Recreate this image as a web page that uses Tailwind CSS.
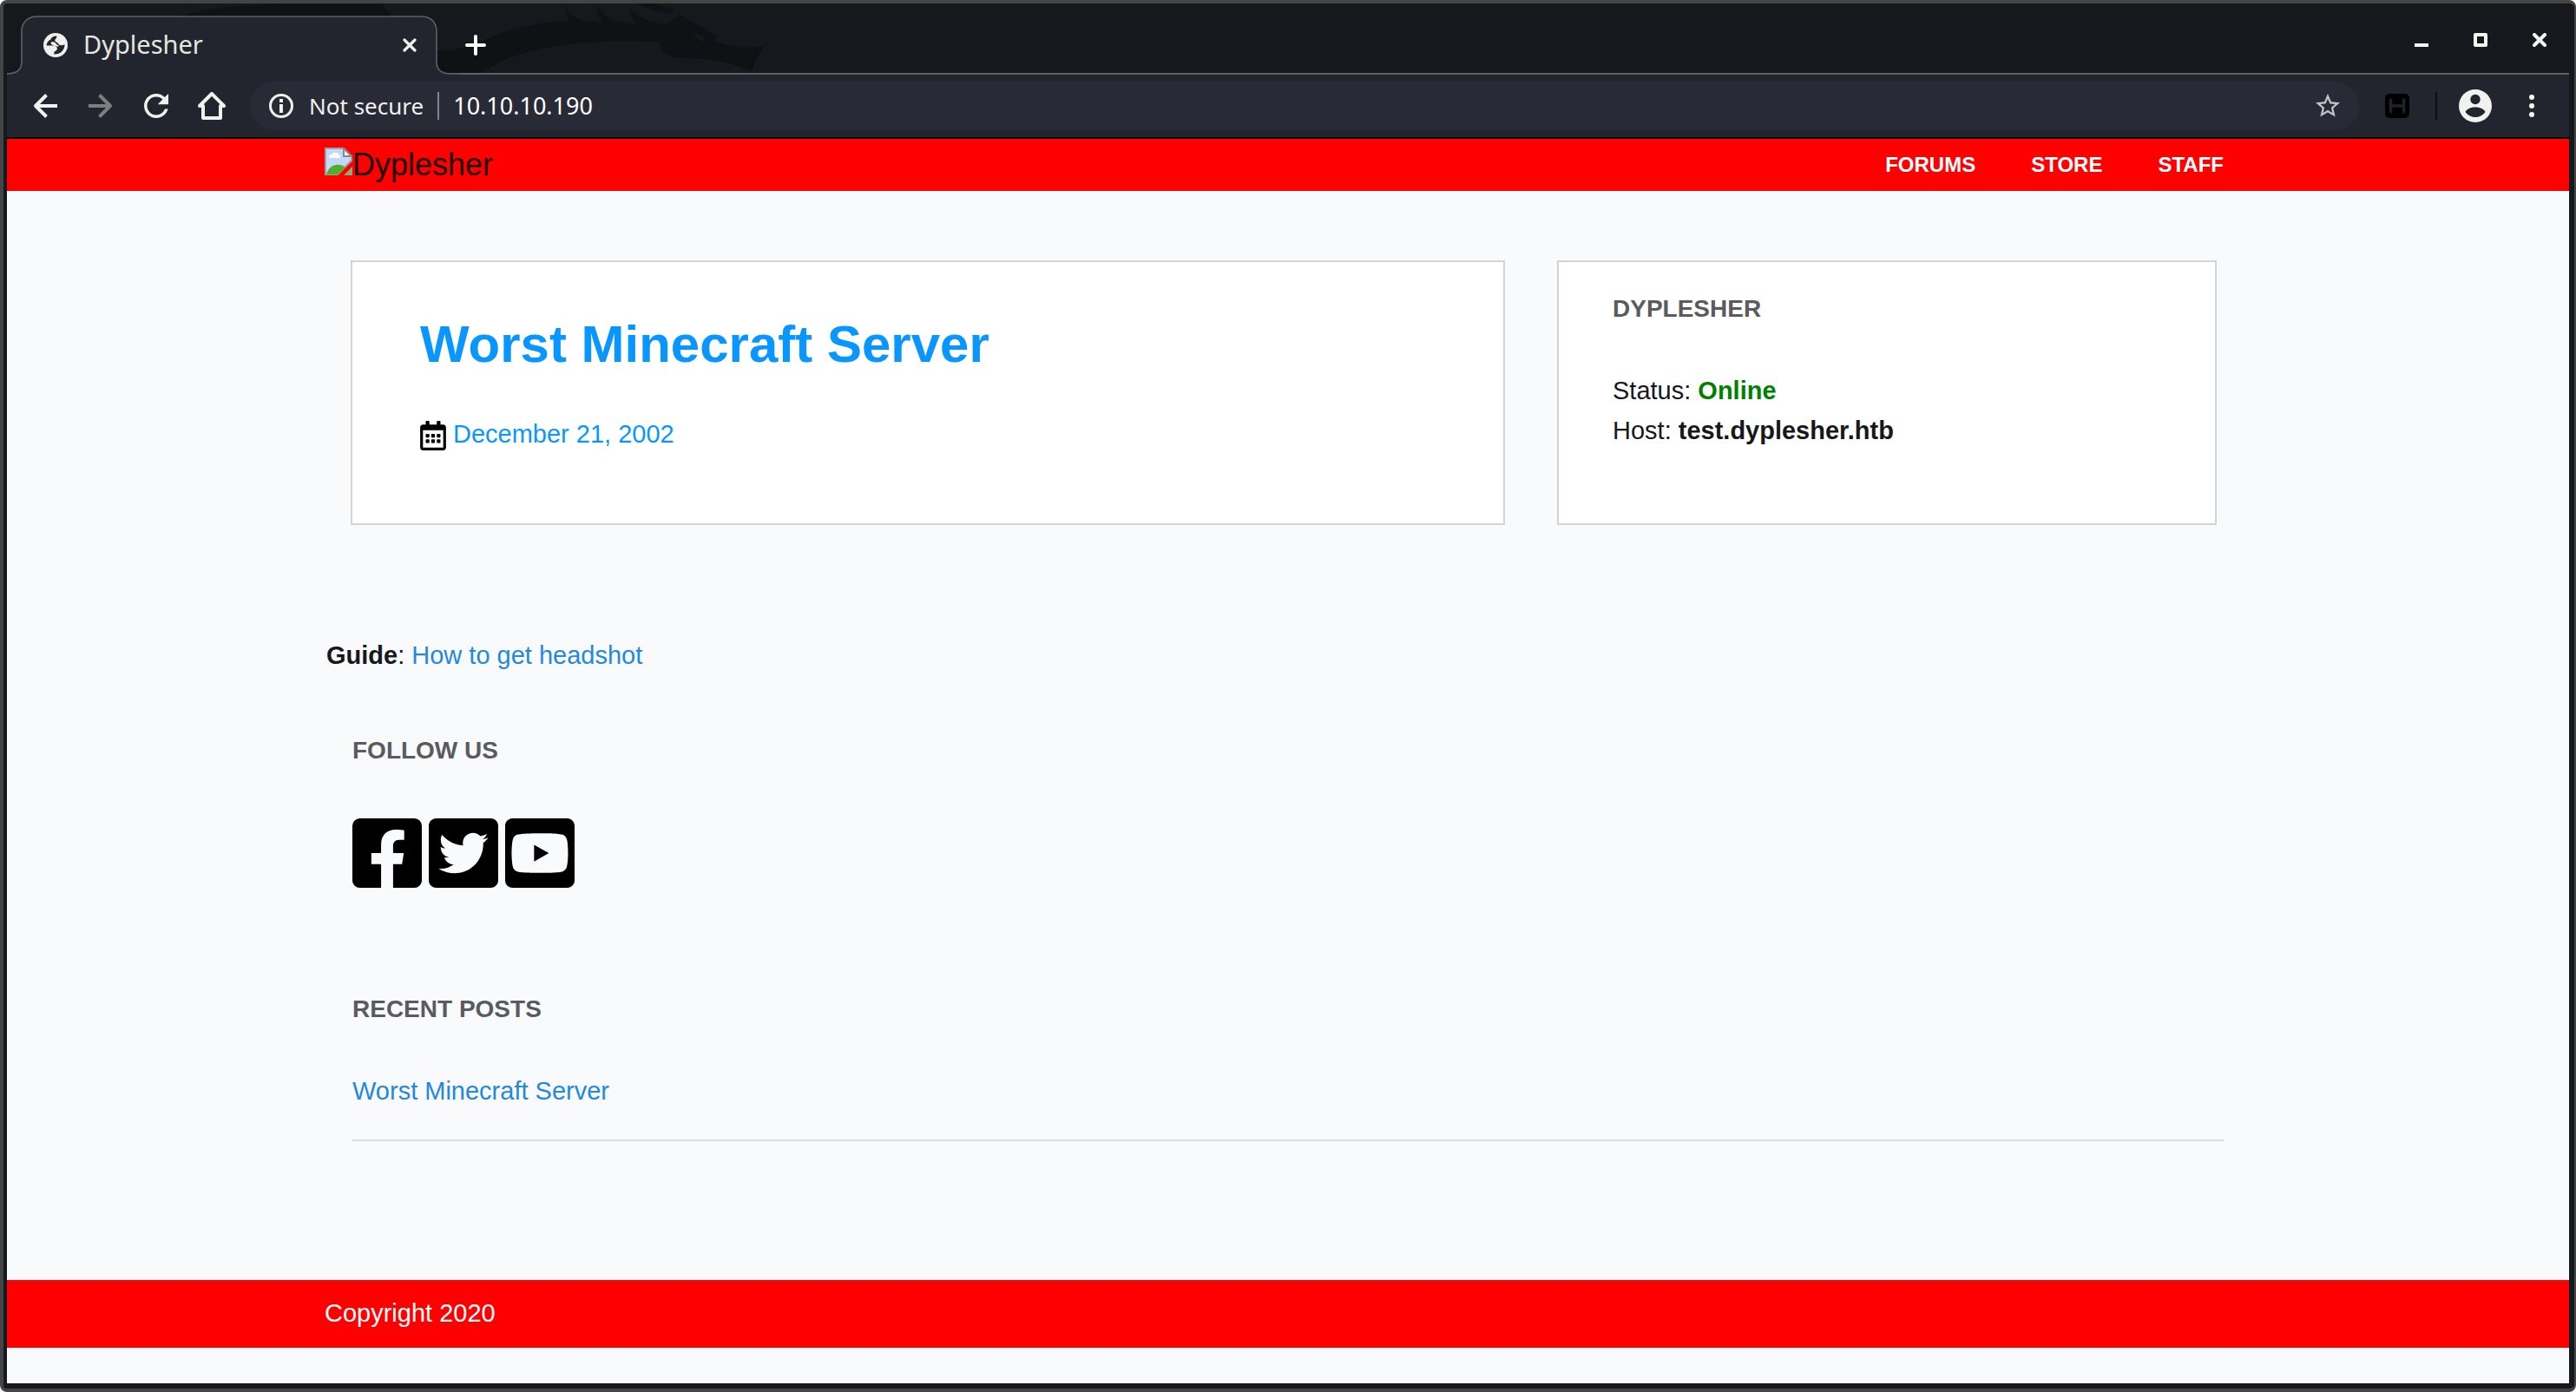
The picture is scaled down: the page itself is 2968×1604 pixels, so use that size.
<!DOCTYPE html>
<html lang="en">
<head>
<meta charset="utf-8">
<title>Dyplesher</title>
<script src="https://cdn.jsdelivr.net/npm/@tailwindcss/browser@4"></script>
</head>
<body class="bg-white font-['Liberation_Sans',Arial,sans-serif] text-[29px] leading-[46px] text-[#16181b]">
<div class="flex min-h-screen flex-col rounded-lg border-4 border-r-2 border-[#444444] bg-[#17181e] pr-1.5 pb-1.5 pl-1">

  <!-- Tab strip -->
  <div class="relative flex h-[82px] items-stretch border-b-2 border-[#5e6067] font-['Noto_Sans',sans-serif]">
    <svg class="absolute top-0 left-0 h-20 w-[900px]" viewBox="8 4 900 80" fill="#101115" aria-hidden="true">
      <path d="M206 19C240 8 280 5 350 4h90l12 15z"/>
      <path d="M503 58c16 1 36-3 55-12 30-13 65-21 97-22-3-6-4-11-4-16 6 9 14 14 24 16l20 2c-6-6-8-13-8-20 7 10 15 16 26 19l20 2c-5-5-8-11-8-17 9 8 21 14 34 17h10l15-10 40 24c3 2 1 5-2 5 18 9 38 10 57 7l-14 29c-20-10-52-15-82-15-14-1-20-8-25-19-25-1-55-1-78 1-62 5-95 14-125 35h-52z"/>
      <path d="M731 4h22l23 7-4 5c-14-2-28-7-41-12z"/>
      <path fill="#17181e" d="M798 36l14 8v4c-7-2-11-6-14-12z"/>
    </svg>
    <svg class="absolute top-0 left-0 h-[82px] w-[520px]" viewBox="8 4 520 82" aria-hidden="true">
      <path d="M8 86v-1c11 0 17-5 17-14V36c0-10 7-17 17-17h444c10 0 17 7 17 17v36c0 8 6 13 17 13h8v1z" fill="#23252e"/>
      <path d="M8 85c11 0 17-5 17-14V36c0-10 7-17 17-17h444c10 0 17 7 17 17v36c0 8 6 13 17 13h8" fill="none" stroke="#5e6067" stroke-width="1.6"/>
    </svg>
    <div class="relative flex w-[500px] items-center pt-4 pr-7 pl-[42px] text-[29px] leading-10 text-[#e6e6e2]">
      <svg class="h-7 w-7" viewBox="0 0 28 28" aria-hidden="true">
        <circle cx="14" cy="14" r="14" fill="#efefec"/>
        <path fill="#23252e" d="M3.500 14.500C4 10 7 8 8.500 7.500 9 5 12 3.500 15.500 3.500c-.5 1.500-.2 2.500-1.500 3.500-1.500 1-.5 3 1 3.500 2 .5 2 3 4 3.500 2 .4 3.500 0 5.500-.8C24.500 17 23 20 20.500 22c-1.500 1.500-5 2.800-8.500 2.500.5-1.500.2-3 1.500-3.500 2-.8 3-2.500 2-4.500-1-1.800-3.500-2-5.500-2z"/>
        <path fill="#efefec" d="M8.500 10.500c2-.5 4-.5 5 .5s2 3 4.500 3.500c-1 2-4 .5-6.500-.3-1.500-.5-3-1-3-3.700zM17.500 4.500c3.500 1 6 4 7 8-2.500 1.300-5.500.5-6.500-1.500-.8-1.500-3.500-1.500-3-3.500.3-1.300 2-1.500 2.500-3z"/>
      </svg>
      <span class="ml-4.5 grow pb-0.5">Dyplesher</span>
      <button aria-label="Close tab"><svg class="h-4 w-4" viewBox="0 0 16 16" stroke="#efefec" stroke-width="3.200" stroke-linecap="round"><path d="M2 2l12 12M14 2L2 14"/></svg></button>
    </div>
    <button class="relative ml-5 flex w-10 items-center justify-center pt-4" aria-label="New tab"><svg class="h-6 w-6" viewBox="0 0 24 24" stroke="#fff" stroke-width="4" stroke-linecap="round"><path d="M12 2v20M2 12h20"/></svg></button>
    <div class="ml-auto flex pt-1">
      <button class="flex w-[68px] items-center justify-center" aria-label="Minimize"><svg class="h-4 w-4" viewBox="0 0 16 16"><path fill="#f4f4f1" d="M0 12h16v4H0z"/></svg></button>
      <button class="flex w-[68px] items-center justify-center" aria-label="Maximize"><svg class="h-4 w-4" viewBox="0 0 16 16"><rect x="2" y="2" width="12" height="12" fill="none" stroke="#f4f4f1" stroke-width="4" stroke-linejoin="round"/></svg></button>
      <button class="flex w-[68px] items-center justify-center" aria-label="Close"><svg class="h-4 w-4" viewBox="0 0 16 16" stroke="#f4f4f1" stroke-width="4" stroke-linecap="round"><path d="M2 2l12 12M14 2L2 14"/></svg></button>
    </div>
  </div>

  <!-- Toolbar -->
  <div class="flex h-[74px] items-center border-b-2 border-[#04070a] bg-[#23252e] pl-3 font-['Noto_Sans',sans-serif] text-[26px] leading-9">
    <button class="flex w-16 justify-center" aria-label="Back"><svg class="h-7 w-7" viewBox="0 0 28 28" fill="none" stroke="#f1f1ee" stroke-width="4"><path d="M28 14H3M15.500 1.500L3 14l12.500 12.500" stroke-linejoin="round"/></svg></button>
    <button class="flex w-16 justify-center" aria-label="Forward"><svg class="h-7 w-7" viewBox="0 0 28 28" fill="none" stroke="#7d7e82" stroke-width="4"><path d="M0 14h25M12.500 1.500L25 14 12.500 26.500" stroke-linejoin="round"/></svg></button>
    <button class="flex w-16 justify-center" aria-label="Reload"><svg class="h-7 w-7" viewBox="4 4 16 16" fill="#f1f1ee"><path d="M17.650 6.350C16.200 4.900 14.210 4 12 4c-4.420 0-7.990 3.580-7.990 8s3.570 8 7.990 8c3.730 0 6.840-2.550 7.730-6h-2.080c-.82 2.330-3.040 4-5.650 4-3.310 0-6-2.690-6-6s2.690-6 6-6c1.660 0 3.140.69 4.220 1.780L13 11h7V4l-2.350 2.350z"/></svg></button>
    <button class="flex w-16 justify-center" aria-label="Home"><svg class="h-8 w-8" viewBox="0 0 32 32" fill="none" stroke="#f1f1ee" stroke-width="4" stroke-linejoin="round"><path d="M2 16L16 2l14 14h-4v14H6V16z"/></svg></button>
    <div class="ml-3 flex h-14 grow items-center rounded-full bg-[#282a35] pr-[22px] pl-[22px] text-[#f0f0ee]">
      <svg class="h-7 w-7" viewBox="0 0 28 28" aria-hidden="true"><circle cx="14" cy="14" r="12.500" fill="none" stroke="#f1f1ee" stroke-width="3"/><path fill="#f1f1ee" d="M12 6h4v4h-4zM12 12h4v10h-4z"/></svg>
      <label for="address" class="ml-[18px] whitespace-nowrap">Not secure</label>
      <span class="ml-4 h-8 w-0.5 bg-[#85868b]"></span>
      <input id="address" class="ml-4 min-w-0 grow bg-transparent text-[27px] text-white outline-none" value="10.10.10.190">
      <button aria-label="Bookmark"><svg class="h-7 w-7" viewBox="2 2 20 20" fill="#c4c4c4"><path d="M22 9.240l-7.190-.62L12 2 9.190 8.630 2 9.240l5.460 4.730L5.820 21 12 17.270 18.180 21l-1.630-7.030L22 9.240zM12 15.400l-3.760 2.270 1-4.280-3.320-2.880 4.380-.38L12 6.100l1.710 4.040 4.380.38-3.320 2.880 1 4.280L12 15.400z"/></svg></button>
    </div>
    <button class="ml-[30px]" aria-label="Extension"><svg class="h-7 w-7" viewBox="0 0 28 28"><rect width="28" height="28" rx="5"/><path d="M6.500 7v14M21.500 7v14M6.500 14h15" fill="none" stroke="#20222a" stroke-width="3.600" stroke-linecap="round"/></svg></button>
    <span class="ml-[30px] h-8 w-0.5 bg-[#0b0c10]"></span>
    <button class="ml-[25px]" aria-label="Profile"><svg class="h-[38px] w-[38px]" viewBox="0 0 38 38"><circle cx="19" cy="19" r="19" fill="#f1f1ee"/><circle cx="19" cy="11.500" r="5.700" fill="#23252e"/><path fill="#23252e" d="M7.500 26c2-4 7-5.500 11.500-5.500S28.500 22 30.500 26c-3 4-7 6-11.500 6s-8.500-2-11.500-6z"/></svg></button>
    <button class="flex w-[89px] justify-center pl-0.5" aria-label="Menu"><svg class="h-[26px] w-1.5" viewBox="0 0 6 26" fill="#f6f6f4"><circle cx="3" cy="3" r="3"/><circle cx="3" cy="13" r="3"/><circle cx="3" cy="23" r="3"/></svg></button>
  </div>

  <!-- Page -->
  <div class="flex grow flex-col bg-[#f9fafc]">
    <header class="bg-[#ff0000]">
      <div class="mx-auto flex h-[60px] max-w-[2220px] items-center justify-between pr-8">
        <a href="#" class="flex items-start pb-0.5 text-[36px] leading-9 text-[#1a0000]">
          <svg class="h-8 w-8" viewBox="0 0 32 32" aria-hidden="true">
            <path d="M1 1h21l9 9v5L15 31H1z" fill="#c5d8f5" stroke="#9ba1a5" stroke-width="2"/>
            <path d="M2 31c3-9 9-12 15-11 3 0 5 1 7 3l-9 8z" fill="#4fae31"/>
            <path d="M5 11c0-3 3-3 4-3 1-3 6-3 7 0 2 0 3 3 1 4H6z" fill="#fff"/>
            <path d="M22 1v9h9z" fill="#f5f5f5" stroke="#85898c" stroke-width="2"/>
            <path d="M32 22v10H22z" fill="#7fb37a"/>
          </svg>
          <span class="pt-0.5">Dyplesher</span>
        </a>
        <nav class="flex gap-16 text-[24px] font-bold text-white">
          <a href="#">FORUMS</a><a href="#">STORE</a><a href="#">STAFF</a>
        </nav>
      </div>
    </header>

    <main class="mx-auto w-full max-w-[2220px]">
      <div class="mt-20 mr-10 ml-[30px] grid grid-cols-[1330fr_760fr] gap-[60px]">
        <article class="border-2 border-[#d4d4d4] bg-white px-[78px] pt-[59px] pb-[80px]">
          <h1 class="text-[60px] leading-[72px] font-bold"><a href="#" class="text-[#0a96ff]">Worst Minecraft Server</a></h1>
          <p class="mt-11 flex items-center text-[#0a96ff]">
            <svg class="mt-1 mr-2 h-[34px] w-[30px]" viewBox="0 0 448 512" fill="#000" aria-hidden="true"><path d="M148 288h-40c-6.600 0-12-5.400-12-12v-40c0-6.600 5.400-12 12-12h40c6.600 0 12 5.400 12 12v40c0 6.600-5.400 12-12 12zm108-12v-40c0-6.600-5.400-12-12-12h-40c-6.600 0-12 5.400-12 12v40c0 6.600 5.400 12 12 12h40c6.600 0 12-5.400 12-12zm96 0v-40c0-6.600-5.400-12-12-12h-40c-6.600 0-12 5.400-12 12v40c0 6.600 5.400 12 12 12h40c6.600 0 12-5.400 12-12zm-96 96v-40c0-6.600-5.400-12-12-12h-40c-6.600 0-12 5.400-12 12v40c0 6.600 5.400 12 12 12h40c6.600 0 12-5.400 12-12zm-96 0v-40c0-6.600-5.400-12-12-12h-40c-6.600 0-12 5.400-12 12v40c0 6.600 5.400 12 12 12h40c6.600 0 12-5.400 12-12zm192 0v-40c0-6.600-5.400-12-12-12h-40c-6.600 0-12 5.400-12 12v40c0 6.600 5.400 12 12 12h40c6.600 0 12-5.400 12-12zm96-260v352c0 26.500-21.500 48-48 48H48c-26.500 0-48-21.500-48-48V112c0-26.500 21.500-48 48-48h48V12c0-6.600 5.400-12 12-12h40c6.600 0 12 5.400 12 12v52h128V12c0-6.600 5.400-12 12-12h40c6.600 0 12 5.400 12 12v52h48c26.500 0 48 21.500 48 48zm-48 346V160H48v298c0 3.300 2.700 6 6 6h340c3.300 0 6-2.700 6-6z"/></svg>
            December 21, 2002
          </p>
        </article>
        <aside class="border-2 border-[#d4d4d4] bg-white px-[62px] pt-[31px]">
          <h2 class="text-[28px] font-bold text-[#5a5b5e]">DYPLESHER</h2>
          <p class="mt-12">Status: <b class="text-[#008000]">Online</b></p>
          <p>Host: <b>test.dyplesher.htb</b></p>
        </aside>
      </div>

      <p class="mt-[127px] pl-0.5"><b>Guide</b>: <a href="#" class="text-[#2288e0]">How to get headshot</a></p>

      <div class="px-8">
        <h2 class="mt-16 text-[28px] font-bold text-[#5a5b5e]">FOLLOW US</h2>
        <div class="mt-[55px] flex gap-2 fill-black">
          <a href="#" aria-label="Facebook"><svg class="h-20 w-20" viewBox="0 32 448 448"><path d="M400 32H48A48 48 0 0 0 0 80v352a48 48 0 0 0 48 48h137.250V327.690h-63V256h63v-54.640c0-62.150 37-96.480 93.670-96.480 27.140 0 55.520 4.840 55.520 4.840v61h-31.270c-30.810 0-40.420 19.120-40.420 38.730V256h68.780l-11 71.690h-57.780V480H400a48 48 0 0 0 48-48V80a48 48 0 0 0-48-48z"/></svg></a>
          <a href="#" aria-label="Twitter"><svg class="h-20 w-20" viewBox="0 32 448 448"><path d="M400 32H48C21.500 32 0 53.500 0 80v352c0 26.500 21.500 48 48 48h352c26.500 0 48-21.500 48-48V80c0-26.500-21.500-48-48-48zm-48.900 158.800c.2 2.800.2 5.700.2 8.500 0 86.700-66 186.600-186.600 186.600-37.200 0-71.700-10.800-100.700-29.400 5.300.6 10.400.8 15.800.8 30.700 0 58.900-10.400 81.400-28-28.800-.6-53-19.500-61.300-45.500 10.100 1.500 19.200 1.500 29.600-1.200-30-6.100-52.500-32.500-52.500-64.400v-.8c8.700 4.900 18.900 7.900 29.600 8.300a65.447 65.447 0 0 1-29.200-54.600c0-12.200 3.200-23.400 8.900-33.100 32.300 39.800 80.800 65.800 135.200 68.600-9.300-44.500 24-80.600 64-80.600 18.900 0 35.900 7.900 47.900 20.700 14.800-2.800 29-8.300 41.600-15.800-4.900 15.200-15.200 28-28.800 36.100 13.200-1.400 26-5.100 37.800-10.200-8.900 13.100-20.100 24.700-32.900 34z"/></svg></a>
          <a href="#" aria-label="YouTube"><svg class="h-20 w-20" viewBox="0 32 448 448"><path d="M186.800 202.100l95.200 54.100-95.200 54.100V202.100zM448 80v352c0 26.500-21.500 48-48 48H48c-26.500 0-48-21.500-48-48V80c0-26.500 21.500-48 48-48h352c26.500 0 48 21.500 48 48zm-42 176.300s0-59.600-7.600-88.200c-4.200-15.800-16.500-28.200-32.200-32.400C337.900 128 224 128 224 128s-113.900 0-142.200 7.700c-15.700 4.200-28 16.600-32.200 32.400-7.600 28.500-7.600 88.200-7.600 88.200s0 59.600 7.600 88.200c4.200 15.800 16.500 27.700 32.200 31.900C110.100 384 224 384 224 384s113.900 0 142.200-7.700c15.700-4.200 28-16.100 32.200-31.900 7.600-28.500 7.600-88.100 7.600-88.100z"/></svg></a>
        </div>
        <h2 class="mt-[117px] text-[28px] font-bold text-[#5a5b5e]">RECENT POSTS</h2>
        <a href="#" class="mt-12 block text-[#2288e0]">Worst Minecraft Server</a>
        <hr class="mt-[33px] border-t-2 border-[#dcdddf]">
      </div>
    </main>

    <footer class="mt-40 bg-[#ff0000] pt-[15px] pb-[17px] text-white">
      <div class="mx-auto max-w-[2220px]">Copyright 2020</div>
    </footer>
  </div>
</div>
</body>
</html>
